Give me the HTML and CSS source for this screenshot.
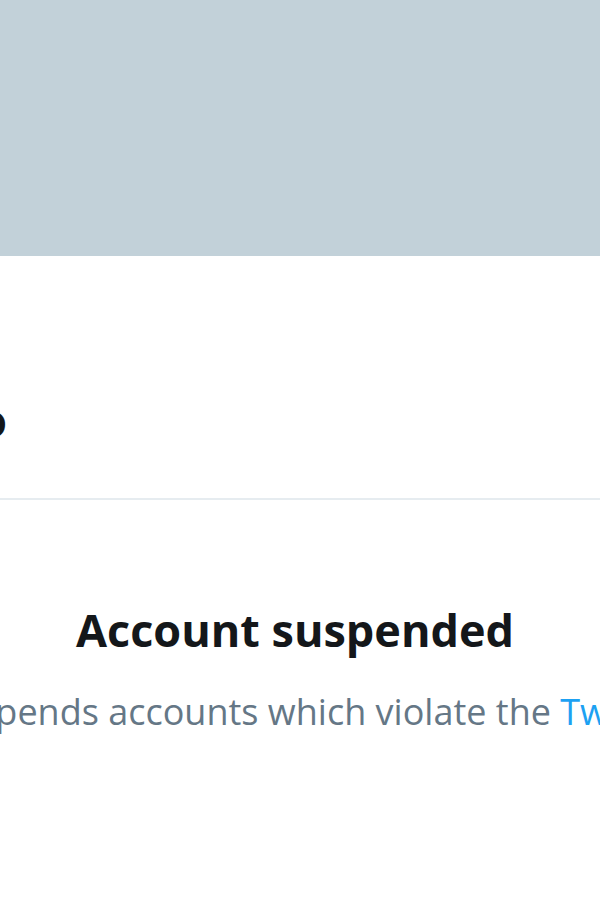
FILE: index.html
```html
<!DOCTYPE html>
<html>
<head>
<meta charset="utf-8">
<link rel="stylesheet" href="styles.css">
</head>
<body>
<div class="page">
  <div class="banner"></div>
  <div class="profile">
    <div class="name-row"><span class="name">Profilo</span></div>
  </div>
  <div class="empty">
    <h1 class="title">Account suspended</h1>
    <p class="desc">Twitter suspends accounts which violate the <a class="link" href="#">Twitter Rules</a></p>
  </div>
</div>
</body>
</html>
```
FILE: styles.css
```css
html, body {
  margin: 0;
  padding: 0;
  background: #ffffff;
  overflow: hidden;
}
.page {
  width: 600px;
  height: 900px;
  overflow: hidden;
  font-family: "Open Sans", "Noto Sans", sans-serif;
}
.banner {
  height: 256px;
  background: #c2d1d9;
}
.profile {
  height: 242px;
  border-bottom: 2px solid #e6ecf0;
  display: flex;
  flex-direction: column;
}
.name-row {
  margin-top: 134px;
  display: flex;
  justify-content: flex-end;
  width: 7px;
}
.name {
  font-weight: 700;
  font-size: 44px;
  line-height: 60px;
  color: #14171a;
  white-space: nowrap;
}
.empty {
  display: flex;
  flex-direction: column;
  align-items: center;
  padding-top: 98px;
  width: 590px;
}
.title {
  margin: 0;
  font-size: 45px;
  line-height: 64px;
  font-weight: 700;
  color: #14171a;
  white-space: nowrap;
}
.desc {
  margin: 26px 0 0;
  font-size: 36px;
  line-height: 48px;
  color: #657786;
  white-space: nowrap;
}
.link {
  color: #1da1f2;
  text-decoration: none;
}
```
